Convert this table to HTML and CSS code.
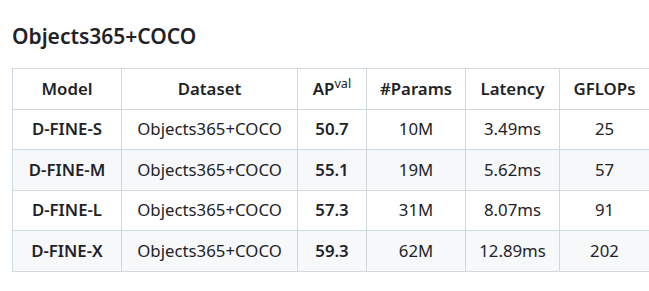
FILE: index.html
```html
<!DOCTYPE html>
<html>
<head>
    <title>Objects365+COCO</title>
    <link rel="stylesheet" href="styles.css">
</head>
<body>
<div class="markdown-body">

<h3>Objects365+COCO</h3>

<table>
    <colgroup>
        <col class="c-model">
        <col class="c-dataset">
        <col class="c-ap">
        <col class="c-params">
        <col class="c-latency">
        <col class="c-gflops">
    </colgroup>
    <thead>
        <tr>
            <th>Model</th>
            <th>Dataset</th>
            <th>AP<sup>val</sup></th>
            <th>#Params</th>
            <th>Latency</th>
            <th>GFLOPs</th>
        </tr>
    </thead>
    <tbody>
        <tr>
            <td><strong>D-FINE-S</strong></td>
            <td>Objects365+COCO</td>
            <td><strong>50.7</strong></td>
            <td>10M</td>
            <td>3.49ms</td>
            <td>25</td>
        </tr>
        <tr>
            <td><strong>D-FINE-M</strong></td>
            <td>Objects365+COCO</td>
            <td><strong>55.1</strong></td>
            <td>19M</td>
            <td>5.62ms</td>
            <td>57</td>
        </tr>
        <tr>
            <td><strong>D-FINE-L</strong></td>
            <td>Objects365+COCO</td>
            <td><strong>57.3</strong></td>
            <td>31M</td>
            <td>8.07ms</td>
            <td>91</td>
        </tr>
        <tr>
            <td><strong>D-FINE-X</strong></td>
            <td>Objects365+COCO</td>
            <td><strong>59.3</strong></td>
            <td>62M</td>
            <td>12.89ms</td>
            <td>202</td>
        </tr>
    </tbody>
</table>

</div>
</body>
</html>
```

FILE: styles.css
```css
BODY {
    margin : 0;
    background : #fff;
}
.markdown-body {
    font-family : "Noto Sans", "Open Sans", sans-serif;
    font-size : 16.8px;
    line-height : 26.4px;
    color : #1f2328;
    padding : 0 0 0 12px;
}
.markdown-body H3 {
    font-size : 21px;
    font-weight : 600;
    line-height : 27.5px;
    margin : 23px 0 17.6px 0;
}
.markdown-body TABLE {
    border-collapse : collapse;
    border-spacing : 0;
    table-layout : fixed;
    width : 637px;
}
.c-model { width : 109px; }
.c-dataset { width : 176px; }
.c-ap { width : 69px; }
.c-params { width : 99px; }
.c-latency { width : 94px; }
.c-gflops { width : 90px; }

.markdown-body TH,
.markdown-body TD {
    border : 1px solid #d1d9e0;
    padding : 6.6px 0;
    text-align : center;
    white-space : nowrap;
}
.markdown-body TH {
    font-weight : 600;
}
.markdown-body STRONG {
    font-weight : 600;
}
.markdown-body TBODY TR:nth-child(2n) {
    background-color : #f6f8fa;
}
.markdown-body SUP {
    font-size : 75%;
    font-weight : 400;
    line-height : 0;
    position : relative;
    vertical-align : baseline;
    top : -0.5em;
}
```
